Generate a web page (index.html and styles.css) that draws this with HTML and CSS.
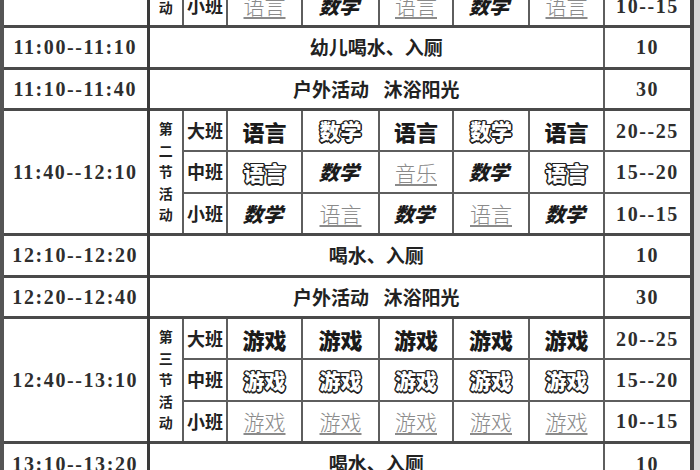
FILE: index.html
```html
<!DOCTYPE html>
<html lang="zh">
<head>
<meta charset="utf-8">
<link rel="stylesheet" href="styles.css">
</head>
<body>
<table class="sched">
<colgroup>
<col class="c-time"><col class="c-sec"><col class="c-cls">
<col class="c-a1"><col class="c-a2"><col class="c-a3"><col class="c-a4"><col class="c-a5">
<col class="c-min">
</colgroup>
<tr>
<td class="time"></td>
<td class="sec sec-end">动</td>
<td class="cls">小班</td>
<td><span class="link">语言</span></td>
<td><span class="ital">数学</span></td>
<td><span class="link">语言</span></td>
<td><span class="ital">数学</span></td>
<td><span class="link">语言</span></td>
<td class="num">10--15</td>
</tr>
<tr class="major">
<td class="time">11:00--11:10</td>
<td class="wide" colspan="7">幼儿喝水、入厕</td>
<td class="num">10</td>
</tr>
<tr class="major">
<td class="time">11:10--11:40</td>
<td class="wide" colspan="7">户外活动 沐浴阳光</td>
<td class="num">30</td>
</tr>
<tr class="major">
<td class="time" rowspan="3">11:40--12:10</td>
<td class="sec" rowspan="3"><span>第</span><span>二</span><span>节</span><span>活</span><span>动</span></td>
<td class="cls">大班</td>
<td><span class="heavy">语言</span></td>
<td><span class="hollow">数学</span></td>
<td><span class="heavy">语言</span></td>
<td><span class="hollow">数学</span></td>
<td><span class="heavy">语言</span></td>
<td class="num">20--25</td>
</tr>
<tr>
<td class="cls">中班</td>
<td><span class="hollow">语言</span></td>
<td><span class="ital">数学</span></td>
<td><span class="link">音乐</span></td>
<td><span class="ital">数学</span></td>
<td><span class="hollow">语言</span></td>
<td class="num">15--20</td>
</tr>
<tr>
<td class="cls">小班</td>
<td><span class="ital">数学</span></td>
<td><span class="link">语言</span></td>
<td><span class="ital">数学</span></td>
<td><span class="link">语言</span></td>
<td><span class="ital">数学</span></td>
<td class="num">10--15</td>
</tr>
<tr class="major">
<td class="time">12:10--12:20</td>
<td class="wide" colspan="7">喝水、入厕</td>
<td class="num">10</td>
</tr>
<tr class="major">
<td class="time">12:20--12:40</td>
<td class="wide" colspan="7">户外活动 沐浴阳光</td>
<td class="num">30</td>
</tr>
<tr class="major">
<td class="time" rowspan="3">12:40--13:10</td>
<td class="sec" rowspan="3"><span>第</span><span>三</span><span>节</span><span>活</span><span>动</span></td>
<td class="cls">大班</td>
<td><span class="heavy">游戏</span></td>
<td><span class="heavy">游戏</span></td>
<td><span class="heavy">游戏</span></td>
<td><span class="heavy">游戏</span></td>
<td><span class="heavy">游戏</span></td>
<td class="num">20--25</td>
</tr>
<tr>
<td class="cls">中班</td>
<td><span class="hollow">游戏</span></td>
<td><span class="hollow">游戏</span></td>
<td><span class="hollow">游戏</span></td>
<td><span class="hollow">游戏</span></td>
<td><span class="hollow">游戏</span></td>
<td class="num">15--20</td>
</tr>
<tr>
<td class="cls">小班</td>
<td><span class="link">游戏</span></td>
<td><span class="link">游戏</span></td>
<td><span class="link">游戏</span></td>
<td><span class="link">游戏</span></td>
<td><span class="link">游戏</span></td>
<td class="num">10--15</td>
</tr>
<tr class="major">
<td class="time">13:10--13:20</td>
<td class="wide" colspan="7">喝水、入厕</td>
<td class="num">10</td>
</tr>
</table>
</body>
</html>
```

FILE: styles.css
```css
html, body {
  margin: 0;
  padding: 0;
  background: #d6d6d6;
  overflow: hidden;
}

.sched {
  border-collapse: collapse;
  table-layout: fixed;
  width: 694px;
  margin-top: -16px;
  background: #fff;
  border-left: 4px solid #555;
  border-right: 4px solid #444;
  font-family: "Noto Sans CJK SC", sans-serif;
  color: #222;
}

.c-time { width: 146px; }
.c-sec { width: 35px; }
.c-cls { width: 44px; }
.c-a1 { width: 75px; }
.c-a2 { width: 77px; }
.c-a3 { width: 74px; }
.c-a4 { width: 76px; }
.c-a5 { width: 75px; }
.c-min { width: 88px; }

.sched tr {
  height: 41.6px;
}

.sched td {
  border: 2px solid #5e5e5e;
  padding: 0;
  text-align: center;
  vertical-align: middle;
  line-height: 1.1;
  overflow: hidden;
  white-space: nowrap;
}

.sched tr.major td {
  border-top: 3px solid #4a4a4a;
}

.sched td.time {
  border-right: 3px solid #3a3a3a;
}

.time, .num {
  font-family: "Liberation Serif", serif;
  font-weight: bold;
  font-size: 20px;
  letter-spacing: 1.6px;
  color: #2e2e2e;
}

.wide {
  font-size: 19px;
  font-weight: bold;
  word-spacing: 10px;
  color: #222;
}

.sec {
  font-size: 14px;
  font-weight: bold;
  line-height: 21.5px;
}

.sec span {
  display: block;
  line-height: 21.5px;
}

.sched td.sec-end {
  vertical-align: bottom;
  padding-bottom: 10px;
}

.cls {
  font-size: 18px;
  font-weight: bold;
}

.heavy {
  font-size: 22px;
  font-weight: 900;
  color: #1a1a1a;
}

.hollow {
  font-size: 21px;
  font-weight: 900;
  color: #fff;
  text-shadow:
    -1px -1px 0 #222, 1px -1px 0 #222, -1px 1px 0 #222, 1px 1px 0 #222,
    0 -1.5px 0 #222, 0 1.5px 0 #222, -1.5px 0 0 #222, 1.5px 0 0 #222;
}

.ital {
  display: inline-block;
  font-size: 20px;
  font-weight: 900;
  color: #1a1a1a;
  transform: skewX(-16deg);
}

.link {
  font-size: 21px;
  font-weight: 300;
  color: #8a8a8a;
  text-decoration: underline;
  text-decoration-color: #8a8a8a;
  text-underline-offset: 3px;
}
```
